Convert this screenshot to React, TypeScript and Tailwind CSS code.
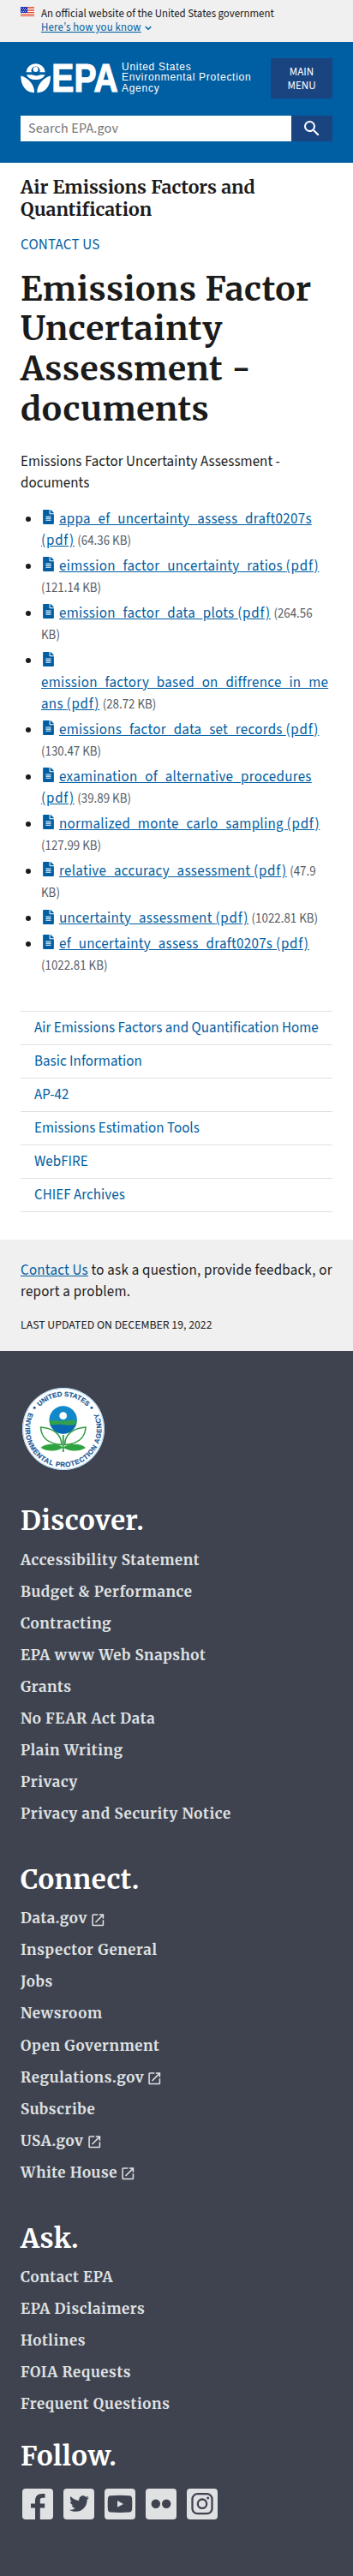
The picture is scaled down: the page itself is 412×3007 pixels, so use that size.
import type { ReactNode } from 'react';
import { FaFileAlt, FaTwitter } from 'react-icons/fa';
import { MdLaunch, MdSearch } from 'react-icons/md';

type DocumentLink = { lines: string[]; size: string[] };

const documents: DocumentLink[] = [
  { lines: ['appa_ef_uncertainty_assess_draft0207s', '(pdf)'], size: ['(64.36 KB)'] },
  { lines: ['eimssion_factor_uncertainty_ratios (pdf)'], size: ['', '(121.14 KB)'] },
  { lines: ['emission_factor_data_plots (pdf)'], size: ['(264.56', 'KB)'] },
  { lines: ['', 'emission_factory_based_on_diffrence_in_me', 'ans (pdf)'], size: ['(28.72 KB)'] },
  { lines: ['emissions_factor_data_set_records (pdf)'], size: ['', '(130.47 KB)'] },
  { lines: ['examination_of_alternative_procedures', '(pdf)'], size: ['(39.89 KB)'] },
  { lines: ['normalized_monte_carlo_sampling (pdf)'], size: ['', '(127.99 KB)'] },
  { lines: ['relative_accuracy_assessment (pdf)'], size: ['(47.9', 'KB)'] },
  { lines: ['uncertainty_assessment (pdf)'], size: ['(1022.81 KB)'] },
  { lines: ['ef_uncertainty_assess_draft0207s (pdf)'], size: ['', '(1022.81 KB)'] },
];

const sectionLinks = [
  'Air Emissions Factors and Quantification Home',
  'Basic Information',
  'AP-42',
  'Emissions Estimation Tools',
  'WebFIRE',
  'CHIEF Archives',
];

const discover = [
  'Accessibility Statement',
  'Budget & Performance',
  'Contracting',
  'EPA www Web Snapshot',
  'Grants',
  'No FEAR Act Data',
  'Plain Writing',
  'Privacy',
  'Privacy and Security Notice',
];

const connect = [
  'Data.gov',
  'Inspector General',
  'Jobs',
  'Newsroom',
  'Open Government',
  'Regulations.gov',
  'Subscribe',
  'USA.gov',
  'White House',
];

const ask = ['Contact EPA', 'EPA Disclaimers', 'Hotlines', 'FOIA Requests', 'Frequent Questions'];

const external = new Set(['Data.gov', 'Regulations.gov', 'USA.gov', 'White House']);

function Flag() {
  return (
    <svg viewBox="0 0 16 11" className="h-[11px] w-4 shrink-0" shapeRendering="crispEdges">
      <rect width="16" height="11" fill="#fff" />
      {[0, 2, 4, 6, 8, 10].map((y) => (
        <rect key={y} y={y} width="16" height="1" fill="#db3e1f" />
      ))}
      <rect width="8" height="7" fill="#1e33b1" />
      {[1, 3, 5].map((y) =>
        [1, 3, 5].map((x) => <rect key={`${x}-${y}`} x={x + (y === 3 ? 1 : 0)} y={y} width="1" height="1" fill="#b9c2ee" />),
      )}
    </svg>
  );
}

function Banner() {
  return (
    <div className="flex h-[49px] gap-2 bg-[#f0f0f0] px-6 pt-2 text-[12.8px] leading-4">
      <Flag />
      <div>
        <p className="whitespace-nowrap">An official website of the United States government</p>
        <a className="flex items-center gap-1 text-[#005ea2]">
          <span className="tracking-[0.18px] underline">Here’s how you know</span>
          <svg viewBox="0 0 8 6" className="mt-0.5 h-1.5 w-2" fill="none" stroke="currentColor" strokeWidth="1.5">
            <path d="M0.7 1 4 4.3 7.3 1" />
          </svg>
        </a>
      </div>
    </div>
  );
}

function Logo() {
  return (
    <div className="flex gap-[3px] text-white">
      <svg viewBox="0 0 115 38" className="h-[38px] w-[115px] overflow-visible" fill="#fff">
        <path d="M6.5 12.200A11.200 11 0 0 1 28.800 12.200H22.300A5 5 0 1 0 12.900 12.200Z" />
        <circle cx="17.600" cy="9" r="3" />
        <path d="M7 15.200h5.500c3 0 4 1.300 6 1.300s3-1.300 5.500-1.300h4.500C27 18.800 23 21 17.700 21S8.500 18.800 7 15.200Z" />
        <path d="M.3 16.500C.3 28 6 36 16 36.300 16.500 27 9 18.500 .3 16.500Z" />
        <path d="M35 16.500C35 28 29.500 36 19.300 36.300 19 27 26.500 18.500 35 16.500Z" />
        <text
          x="36.300"
          y="35.300"
          textLength="77.500"
          lengthAdjust="spacingAndGlyphs"
          className="font-['Liberation_Sans',sans-serif] text-[46px] font-bold"
          stroke="#fff"
          strokeWidth="1.200"
        >
          EPA
        </text>
      </svg>
      <p className="font-['Liberation_Sans',sans-serif] text-[12px] leading-[12.900px] tracking-[0.720px] whitespace-nowrap">
        United States
        <br />
        Environmental Protection
        <br />
        Agency
      </p>
    </div>
  );
}

function Header() {
  return (
    <header className="h-[141px] bg-[#005ea2] px-6 pt-[18.500px]">
      <div className="flex justify-between">
        <div className="pt-1">
          <Logo />
        </div>
        <button className="h-[47px] w-[72px] bg-[#1a4480] pt-0.5 text-center text-[13px] leading-[16px] text-white">
          MAIN
          <br />
          MENU
        </button>
      </div>
      <div className="mt-5 flex h-[30px]">
        <div className="flex w-[316px] items-center bg-white pt-px pl-[9px] text-base tracking-[0.200px] text-[#757575]">
          Search EPA.gov
        </div>
        <button className="flex flex-1 items-center justify-center bg-[#1a4480] text-white">
          <MdSearch className="size-6" />
        </button>
      </div>
    </header>
  );
}

function DocumentItem({ lines, size }: DocumentLink) {
  return (
    <li className="mb-[4.240px] whitespace-nowrap">
      <FaFileAlt className="mr-[6.500px] ml-[1.500px] inline h-[17px] w-[13px] align-[-1.500px] text-[#005ea2]" />
      {lines.map((line, i) => (
        <span key={i}>
          {i > 0 && <br />}
          <a className="tracking-[0.290px] text-[#005ea2] underline">
            {line.replace('(pdf)', '')}
            {line.endsWith('(pdf)') && <span className="tracking-[0.800px]">(pdf)</span>}
          </a>
        </span>
      ))}{' '}
      {size.map((part, i) => (
        <span key={i} className="text-[14.900px] text-[#565c65]">
          {i > 0 && <br />}
          {part}
        </span>
      ))}
    </li>
  );
}

function Seal() {
  return (
    <svg viewBox="0 0 96 96" className="ml-0.5 size-24">
      <defs>
        <path id="seal-top" d="M10 48a38 38 0 0 1 76 0" />
        <path id="seal-bottom" d="M8.260 27.900a44.500 44.500 0 1 0 79.480 0" />
      </defs>
      <circle cx="48" cy="48" r="48" fill="#fff" />
      <circle cx="48" cy="48" r="47.400" fill="none" stroke="#a9d5f5" strokeWidth="1" />
      <g className="font-['Liberation_Sans',sans-serif] text-[8px]" fill="#1b5a96" stroke="#1b5a96" strokeWidth="0.200">
        <text>
          <textPath href="#seal-top" startOffset="50%" textAnchor="middle" textLength="62">
            UNITED STATES
          </textPath>
        </text>
        <text>
          <textPath href="#seal-bottom" startOffset="1" textLength="178">
            ENVIRONMENTAL PROTECTION AGENCY
          </textPath>
        </text>
      </g>
      <circle cx="14.200" cy="23.300" r="1.500" fill="#1b5a96" />
      <circle cx="81" cy="23.300" r="1.500" fill="#1b5a96" />
      <circle cx="47.700" cy="37.500" r="16.200" fill="#1088c9" />
      <path d="M31.600 38.500c5-1.500 10 1 16 0s11-1 16.200 0a16.200 16.200 0 0 1-32.200 0Z" fill="#35a04a" />
      <path d="M32.500 43c5 1.200 9-1 15 0s10.500.500 15.400 0a16.200 16.200 0 0 1-30.400 0Z" fill="#0868b3" />
      <circle cx="47.700" cy="32.700" r="4.400" fill="#fff" />
      <g fill="none" stroke="#319b42" strokeWidth="1.600">
        <path d="M21.500 46c.5 12 9 19.500 24.500 20.500C45.500 54 36 47 21.500 46Z" />
        <path d="M74 46c-.5 12-9 19.500-24.500 20.500C50 54 59.500 47 74 46Z" />
        <path d="M47.800 55v20" strokeWidth="1.800" />
      </g>
      <g fill="#2fa33f">
        <path d="M21.500 70c6-5.500 19-5.500 26-.5-5 4.500-18 6-26 .5Z" />
        <path d="M74 70c-6-5.500-19-5.500-26-.5 5 4.500 18 6 26 .5Z" />
      </g>
    </svg>
  );
}

function FooterGroup({ title, links }: { title: string; links: string[] }) {
  return (
    <section>
      <h2 className="text-[31.200px] leading-10 font-bold tracking-[0.400px] text-white">{title}</h2>
      <ul className="mt-[7.300px]">
        {links.map((link) => (
          <li key={link} className="flex h-[37.120px] items-center">
            <a className="tracking-[0.600px]">{link}</a>
            {external.has(link) && <MdLaunch className="mt-0.5 ml-[3px] size-[18.500px]" />}
          </li>
        ))}
      </ul>
    </section>
  );
}

function SocialTile({ children }: { children: ReactNode }) {
  return <a className="flex size-9 items-center justify-center overflow-hidden rounded bg-[#dfe1e2] text-[#3f4350]">{children}</a>;
}

function SocialLinks() {
  return (
    <div className="mt-[17.400px] ml-0.5 flex gap-3">
      <SocialTile>
        <svg viewBox="0 0 36 36" className="size-9" fill="currentColor">
          <path d="M15 36V22.500h-5V17.600h5v-3.400c0-5.300 3-8.200 8-8.200h3.500v4.700h-2.800c-2.300 0-2.900 1.100-2.900 2.900v4h5.400v4.900h-5.400V36Z" />
        </svg>
      </SocialTile>
      <SocialTile>
        <FaTwitter className="size-[23px]" />
      </SocialTile>
      <SocialTile>
        <svg viewBox="0 0 36 36" className="size-9">
          <path d="M7 8.200c7-.7 15-.7 22 0 2.200.2 3 1.500 3.100 3.500.3 4 .3 8.600 0 12.600-.2 2-1 3-3.100 3.200-7 .6-15 .6-22 0-2.200-.2-3-1.200-3.100-3.200-.3-4-.3-8.600 0-12.600.1-2 .9-3.300 3.100-3.500Z" fill="currentColor" />
          <path d="M15 14v7.800l7-3.900Z" fill="#dfe1e2" />
        </svg>
      </SocialTile>
      <SocialTile>
        <svg viewBox="0 0 36 36" className="size-9" fill="currentColor">
          <circle cx="11.800" cy="17.800" r="5.200" />
          <circle cx="24.200" cy="17.800" r="5.200" />
        </svg>
      </SocialTile>
      <SocialTile>
        <svg viewBox="0 0 36 36" className="size-9" fill="none" stroke="currentColor" strokeWidth="2.300">
          <rect x="6.500" y="6.200" width="23" height="23" rx="6" />
          <circle cx="18" cy="17.700" r="5.200" />
          <circle cx="24.700" cy="11" r="1.500" fill="currentColor" stroke="none" />
        </svg>
      </SocialTile>
    </div>
  );
}

export default function App() {
  return (
    <div className="w-[412px] bg-white font-['Source_Sans_3','Noto_Sans_CJK_SC',sans-serif] text-[16.960px] leading-[25.440px] text-[#1b1b1b]">
      <Banner />
      <Header />
      <main className="px-6 pt-[16.200px]">
        <h2 className="font-['Merriweather','Noto_Serif',serif] text-[21.250px] leading-[26px] font-bold tracking-[0.050px]">
          Air Emissions Factors and
          <br />
          Quantification
        </h2>
        <a className="mt-[15.600px] block tracking-[0.200px] text-[#005ea2]">CONTACT US</a>
        <h1 className="mt-[15.300px] font-['Merriweather','Noto_Serif',serif] text-[39.040px] leading-[46.850px] font-bold tracking-[0.560px] whitespace-nowrap">
          Emissions Factor
          <br />
          Uncertainty
          <br />
          Assessment -
          <br />
          documents
        </h1>
        <p className="mt-[24.900px] tracking-[0.050px]">
          Emissions Factor Uncertainty Assessment -
          <br />
          documents
        </p>
        <ul className="mt-[16.100px] list-disc pl-6">
          {documents.map((doc) => (
            <DocumentItem key={doc.lines.join('')} {...doc} />
          ))}
        </ul>
        <nav className="mt-[39.240px] border-t border-[#dfe1e2]">
          {sectionLinks.map((link) => (
            <a
              key={link}
              className="flex h-[39px] items-center border-b border-[#dfe1e2] pt-0.5 pl-4 tracking-[0.040px] whitespace-nowrap text-[#005ea2]"
            >
              {link}
            </a>
          ))}
        </nav>
      </main>
      <div className="mt-8 h-[130.500px] bg-[#f0f0f0] px-6 pt-6">
        <p className="tracking-[0.230px] whitespace-nowrap">
          <a className="text-[#005ea2] underline">Contact Us</a> to ask a question, provide feedback, or
          <br />
          report a problem.
        </p>
        <p className="mt-[15px] text-[13.750px] leading-5">LAST UPDATED ON DECEMBER 19, 2022</p>
      </div>
      <footer className="h-[1429.500px] bg-[#3f4350] px-6 pt-[42.500px] font-['Merriweather','Noto_Serif',serif] font-bold text-[#dfe1e2]">
        <Seal />
        <div className="mt-[39.600px] flex flex-col gap-[37.300px]">
          <FooterGroup title="Discover." links={discover} />
          <FooterGroup title="Connect." links={connect} />
          <FooterGroup title="Ask." links={ask} />
        </div>
        <h2 className="mt-[21.700px] text-[31.200px] leading-10 tracking-[0.600px] text-white">Follow.</h2>
        <SocialLinks />
      </footer>
    </div>
  );
}
